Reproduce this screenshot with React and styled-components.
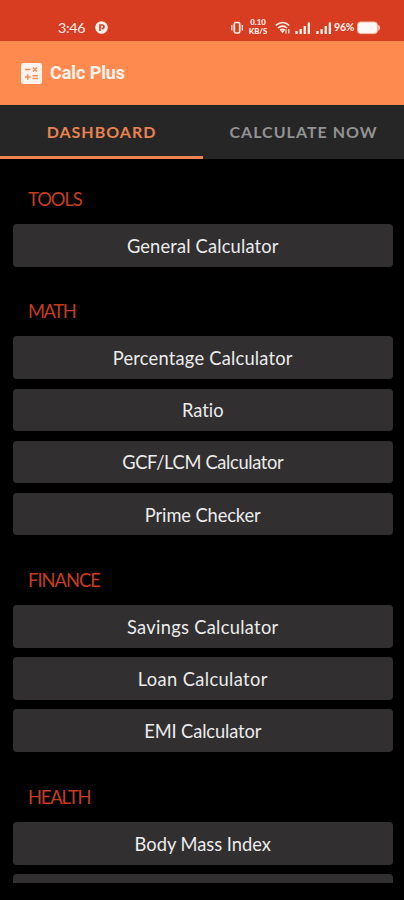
import React from 'react';
import styled, { createGlobalStyle } from 'styled-components';

const GlobalStyle = createGlobalStyle`
  * { box-sizing: border-box; }
  html, body { margin: 0; background: #000; }
  body { font-family: Lato, "Open Sans", sans-serif; font-variant-ligatures: none; }
`;

const Screen = styled.div`
  width: 404px;
  height: 900px;
  overflow: hidden;
  display: flex;
  flex-direction: column;
  background: #000;
`;

const StatusBar = styled.header`
  flex: none;
  height: 41px;
  padding: 14px 24px 0 58px;
  display: flex;
  align-items: flex-start;
  justify-content: space-between;
  background: #d83d21;
  color: #fff0ea;
`;

const StatusLeft = styled.div`
  display: flex;
  align-items: center;
  gap: 10px;
  height: 27px;
`;

const Clock = styled.span`
  font-size: 14.3px;
  line-height: 20px;
  letter-spacing: -0.3px;
`;

const StatusRight = styled.div`
  display: flex;
  height: 27px;
`;

const DataRate = styled.div`
  display: flex;
  flex-direction: column;
  width: 18px;
  margin: 4px 8px 0 5px;
  align-items: center;
  font-size: 7.8px;
  font-weight: 900;
  line-height: 9.4px;
  white-space: nowrap;
`;

const Percent = styled.span`
  width: 22px;
  font-size: 10.5px;
  font-weight: 700;
  line-height: 27px;
  letter-spacing: -0.2px;
  white-space: nowrap;
`;

const Glyph = styled.svg`
  display: block;
  flex: none;
  width: ${(p) => p.$w}px;
  height: ${(p) => p.$h}px;
`;

const AppBar = styled.div`
  flex: none;
  height: 64px;
  padding: 0 21px;
  display: flex;
  align-items: center;
  gap: 8px;
  background: #ff8a50;
`;

const Title = styled.h1`
  margin: 0;
  font: 700 18px/24px Roboto, sans-serif;
  letter-spacing: -0.08px;
  color: #fff4ed;
`;

const Tabs = styled.nav`
  flex: none;
  height: 54px;
  display: grid;
  grid-template-columns: 203px 201px;
  background: #262627;
  border-top: 1px solid #1c2424;
`;

const Tab = styled.button`
  padding: 2px 0 0;
  border: 0;
  border-bottom: 3px solid ${(p) => (p.$active ? '#ee8451' : 'transparent')};
  background: none;
  color: ${(p) => (p.$active ? '#ea8350' : '#929292')};
  font: 700 16px/20px Lato, sans-serif;
  letter-spacing: ${(p) => p.$spacing}px;
  white-space: nowrap;
`;

const List = styled.main`
  flex: none;
  height: 724px;
  padding: 0 11.5px 0 13px;
  overflow: hidden;
`;

const Section = styled.section`
  padding-top: 26.9px;
`;

const Heading = styled.h2`
  margin: 0 0 12.5px;
  padding: 0 15px;
  height: 25.5px;
  font: 400 18.3px/26.6px Lato, sans-serif;
  letter-spacing: ${(p) => p.$spacing}px;
  color: #c63c22;
`;

const Buttons = styled.div`
  display: grid;
  gap: 9.4px;
  padding-bottom: 5px;
`;

const CalcButton = styled.button`
  height: 42.7px;
  padding: 1px 0 0;
  border: 0;
  border-radius: 4px;
  background: #312f30;
  color: #ececec;
  font: 400 18.3px/24px Lato, sans-serif;
  font-variant-ligatures: none;
  letter-spacing: ${(p) => p.$spacing}px;
`;

const sections = [
  { title: 'TOOLS', spacing: -1, items: [['General Calculator', 0.17]] },
  {
    title: 'MATH',
    spacing: -1.4,
    items: [
      ['Percentage Calculator', 0.22],
      ['Ratio', 0],
      ['GCF/LCM Calculator', -0.34],
      ['Prime Checker', -0.1],
    ],
  },
  {
    title: 'FINANCE',
    spacing: -0.95,
    items: [
      ['Savings Calculator', 0.3],
      ['Loan Calculator', 0.37],
      ['EMI Calculator', -0.13],
    ],
  },
  { title: 'HEALTH', spacing: -1.15, items: [['Body Mass Index', 0], ['', 0]] },
];

const ParkingBadge = () => (
  <Glyph $w={13} $h={13} viewBox="0 0 13 13">
    <circle cx="6.5" cy="6.5" r="6.3" fill="#fff0ea" />
    <path d="M5 10V4h2.2a1.7 1.7 0 0 1 0 3.5H6.5" fill="none" stroke="#d83d21" strokeWidth="1.7" />
  </Glyph>
);

const Vibrate = () => (
  <Glyph $w={13} $h={27} viewBox="0 0 13 27" fill="none" stroke="currentColor">
    <rect x="3.3" y="8.5" width="5.4" height="10.5" rx="1.6" strokeWidth="1.7" />
    <path d="M.8 11v5.5M11.3 11v5.5" strokeWidth="1.3" />
  </Glyph>
);

const Signals = () => (
  <Glyph $w={59} $h={27} viewBox="0 0 59 27">
    <g fill="none" stroke="currentColor" strokeWidth="1.6">
      <path d="M.8 11.4q6.7-5.8 13.4 0M3 14q4.5-3.8 9 0M5.2 16.4q2.3-2 4.6 0" />
      <path d="M11 19.5v-4M13.8 15v4.5" strokeWidth="1.2" />
    </g>
    <path d="M5.5 16.5h4L7.5 19.5z" fill="currentColor" />
    <g fill="currentColor">
      <path d="M20.3 17h2.3v3h-2.3zM24.5 15h2.3v5h-2.3zM28.6 12h2.3v8h-2.3zM32.7 8.5H35V20h-2.3z" />
      <path d="M41.3 17h2.3v3h-2.3zM45.5 15h2.3v5h-2.3zM49.6 12h2.3v8h-2.3zM53.7 8.5H56V20h-2.3z" />
    </g>
  </Glyph>
);

const Battery = () => (
  <Glyph $w={24} $h={27} viewBox="0 0 24 27">
    <rect x="1.6" y="8" width="19.8" height="11.6" rx="3" fill="#fff8f4" stroke="#f5b9a8" />
    <path d="M22.3 11q1.5 0 1.5 2.7t-1.5 2.7z" fill="#fff0ea" />
  </Glyph>
);

const CalculatorLogo = () => (
  <Glyph $w={21} $h={21} viewBox="0 0 21 21">
    <rect width="21" height="21" rx="2.3" fill="#fff4ed" />
    <path
      d="M4 6.5h5.5M12 4.5l4 4M16 4.5l-4 4M4 14h5.5M6.75 11.2v5.6M11.5 12.7h5.5M11.5 15.6h5.5"
      fill="none"
      stroke="#ff8a50"
      strokeWidth="1.5"
    />
  </Glyph>
);

export default function App() {
  return (
    <>
      <GlobalStyle />
      <Screen>
        <StatusBar>
          <StatusLeft>
            <Clock>3:46</Clock>
            <ParkingBadge />
          </StatusLeft>
          <StatusRight>
            <Vibrate />
            <DataRate>
              <span>0.10</span>
              <span>KB/S</span>
            </DataRate>
            <Signals />
            <Percent>96%</Percent>
            <Battery />
          </StatusRight>
        </StatusBar>
        <AppBar>
          <CalculatorLogo />
          <Title>Calc Plus</Title>
        </AppBar>
        <Tabs>
          <Tab $active $spacing={1}>DASHBOARD</Tab>
          <Tab $spacing={1.02}>CALCULATE NOW</Tab>
        </Tabs>
        <List>
          {sections.map((section) => (
            <Section key={section.title}>
              <Heading $spacing={section.spacing}>{section.title}</Heading>
              <Buttons>
                {section.items.map(([label, spacing]) => (
                  <CalcButton key={label} $spacing={spacing}>{label}</CalcButton>
                ))}
              </Buttons>
            </Section>
          ))}
        </List>
      </Screen>
    </>
  );
}
